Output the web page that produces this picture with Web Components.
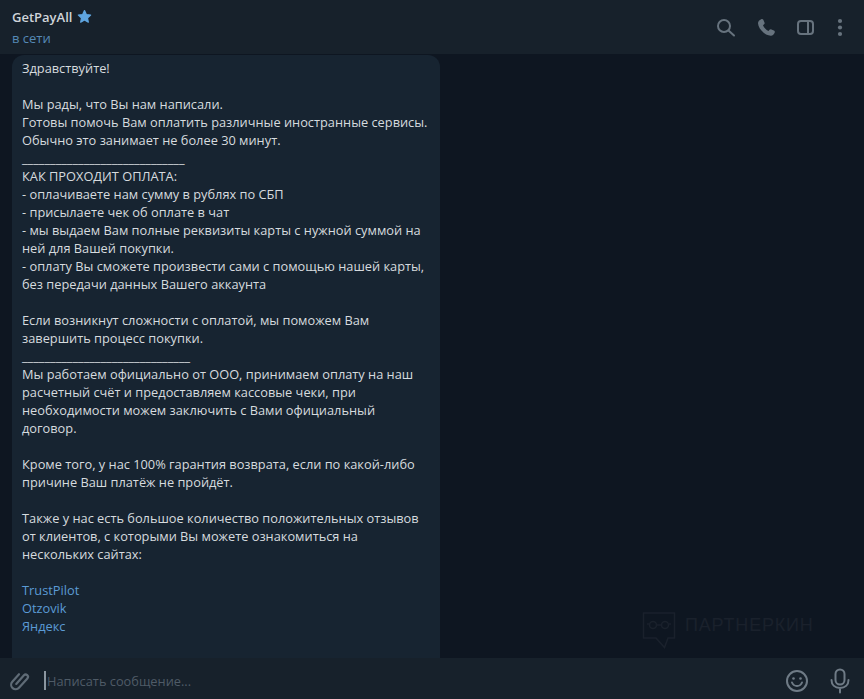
<!DOCTYPE html>
<html lang="ru">
<head>
<meta charset="utf-8">
<title>GetPayAll</title>
<style>
  html, body { margin: 0; height: 100%; background: #0e1621; }
  body { font-family: "Open Sans", "Noto Sans", sans-serif; overflow: hidden; }
  a { color: #5b9bd5; text-decoration: none; }
</style>
</head>
<body>
<chat-window>
  <chat-header slot="header" name="GetPayAll" status="в сети"></chat-header>
  <chat-bubble slot="messages">Здравствуйте!

Мы рады, что Вы нам написали.
Готовы помочь Вам оплатить различные иностранные сервисы.
Обычно это занимает не более 30 минут.
_____________________________
КАК ПРОХОДИТ ОПЛАТА:
- оплачиваете нам сумму в рублях по СБП
- присылаете чек об оплате в чат
- мы выдаем Вам полные реквизиты карты с нужной суммой на
ней для Вашей покупки.
- оплату Вы сможете произвести сами с помощью нашей карты,
без передачи данных Вашего аккаунта

Если возникнут сложности с оплатой, мы поможем Вам
завершить процесс покупки.
______________________________
Мы работаем официально от ООО, принимаем оплату на наш
расчетный счёт и предоставляем кассовые чеки, при
необходимости можем заключить с Вами официальный
договор.

Кроме того, у нас 100% гарантия возврата, если по какой-либо
причине Ваш платёж не пройдёт.

Также у нас есть большое количество положительных отзывов
от клиентов, с которыми Вы можете ознакомиться на
нескольких сайтах:

<a href="#">TrustPilot</a>
<a href="#">Otzovik</a>
<a href="#">Яндекс</a></chat-bubble>
  <water-mark slot="messages"></water-mark>
  <chat-composer slot="composer" placeholder="Написать сообщение..."></chat-composer>
</chat-window>

<script>
class ChatWindow extends HTMLElement {
    constructor() {
        super();
        this.attachShadow({ mode: 'open' });
        this.shadowRoot.innerHTML = `
            <style>
                :host { display: flex; flex-direction: column; height: 699px; width: 864px; }
                #messages {
                    flex: 1;
                    min-height: 0;
                    position: relative;
                    overflow: hidden;
                    padding: 1px 0 0 12px;
                }
            </style>
            <slot name="header"></slot>
            <div id="messages"><slot name="messages"></slot></div>
            <slot name="composer"></slot>
        `;
    }
}

class ChatHeader extends HTMLElement {
    constructor() {
        super();
        this.attachShadow({ mode: 'open' });
        this.shadowRoot.innerHTML = `
            <style>
                :host {
                    display: flex;
                    align-items: center;
                    justify-content: space-between;
                    height: 54px;
                    box-sizing: border-box;
                    padding: 0 21px 0 12px;
                    background: #17212b;
                }
                .title { display: flex; align-items: center; gap: 5px; height: 18px; margin-bottom: 3px;
                    color: #cfd4d9; font-size: 13px; font-weight: 600; }
                .status { color: #5589b6; font-size: 13px; line-height: 18px; }
                .icons { display: flex; align-items: center; gap: 20px; color: #67737e; }
                .panel { margin-left: -3px; }
                svg { display: block; }
            </style>
            <div>
                <div class="title"><span id="name"></span>
                    <svg width="15" height="15" viewBox="0 0 24 24"><path fill="#5fa5e0" stroke="#5fa5e0" stroke-width="2" stroke-linejoin="round" d="M12 2.500l2.900 6.300 6.900.8-5.100 4.700 1.400 6.800-6.100-3.400-6.100 3.400 1.400-6.800-5.100-4.700 6.900-.8z"/></svg>
                </div>
                <div class="status" id="status"></div>
            </div>
            <div class="icons">
                <svg width="22" height="22" viewBox="0 0 22 22" fill="none" stroke="currentColor" stroke-width="2" stroke-linecap="round"><circle cx="10" cy="10" r="6"/><path d="M14.500 14.500l5.500 5"/></svg>
                <svg width="22" height="22" viewBox="0 0 22 22" fill="currentColor"><path transform="translate(-1 1)" d="M6.200 2.200c.8-.5 1.700-.2 2.100.6l1.200 2.600c.3.700.2 1.400-.4 1.900L8 8.200c.9 2.300 3 4.600 5.500 5.700l1-1.100c.5-.5 1.200-.7 1.900-.4l2.500 1.100c.8.400 1.200 1.300.8 2.100-.7 1.900-2.100 3.200-3.900 3.100C9.700 18.300 3.200 11.600 3 6.200c0-1.900 1.400-3.300 3.200-4z"/></svg>
                <svg class="panel" width="22" height="22" viewBox="0 0 22 22" fill="none" stroke="currentColor" stroke-width="2"><rect x="3" y="5" width="15" height="13" rx="3"/><path d="M13 5v13"/></svg>
                <svg width="6" height="20" viewBox="0 0 6 20" fill="currentColor"><circle cx="3" cy="4" r="2.100"/><circle cx="3" cy="10.500" r="2.100"/><circle cx="3" cy="17" r="2.100"/></svg>
            </div>
        `;
        this.shadowRoot.getElementById('name').textContent = this.getAttribute('name');
        this.shadowRoot.getElementById('status').textContent = this.getAttribute('status');
    }
}

class ChatBubble extends HTMLElement {
    constructor() {
        super();
        this.attachShadow({ mode: 'open' });
        this.shadowRoot.innerHTML = `
            <style>
                :host {
                    display: block;
                    width: 428px;
                    box-sizing: border-box;
                    height: 640px;
                    padding: 4px 10px 0;
                    background: #172431;
                    border-radius: 12px;
                    color: #d6dbdf;
                    font-size: 12.8px;
                    line-height: 18px;
                }
                .text { white-space: pre; }
            </style>
            <div class="text"><slot></slot></div>
        `;
    }
}

class WaterMark extends HTMLElement {
    constructor() {
        super();
        this.attachShadow({ mode: 'open' });
        this.shadowRoot.innerHTML = `
            <style>
                :host {
                    position: absolute;
                    left: 642px;
                    top: 558px;
                    display: flex;
                    gap: 9px;
                    color: #1a212c;
                    font-family: "Liberation Sans", sans-serif;
                    font-size: 18px;
                    line-height: 26px;
                    letter-spacing: 0.8px;
                }
                svg { display: block; }
            </style>
            <svg width="34" height="37" viewBox="0 0 34 37" fill="none" stroke="currentColor" stroke-width="1.500"><path d="M1.500 1h31v25H26l-3.500 9.500L14 26H1.500z"/><circle cx="11" cy="13" r="3.500"/><circle cx="23" cy="13" r="3.500"/><path d="M5 12h2.500M14.500 13h5M26.500 12H29"/></svg>
            <span>ПАРТНЕРКИН</span>
        `;
    }
}

class ChatComposer extends HTMLElement {
    constructor() {
        super();
        this.attachShadow({ mode: 'open' });
        this.shadowRoot.innerHTML = `
            <style>
                :host {
                    display: flex;
                    align-items: center;
                    height: 41px;
                    box-sizing: border-box;
                    padding: 4px 14px 0 8px;
                    background: #17212b;
                }
                .input { flex: 1; display: flex; align-items: center; margin-left: 14px; font-size: 12.8px; line-height: 18px; color: #4f5b67; }
                .caret { width: 2px; height: 19px; background: #8b96a0; margin-right: 1px; }
                .icons { display: flex; align-items: center; gap: 21px; color: #6f7b86; }
                svg { display: block; }
            </style>
            <svg width="22" height="24" viewBox="0 0 22 24" fill="none" stroke="#5f6b76" stroke-width="2.200" stroke-linecap="round" overflow="visible"><path transform="rotate(42 11 12)" d="M6.500 7v10a4.500 4.500 0 0 0 9 0V4.500a2.300 2.300 0 0 0-4.600 0V16"/></svg>
            <div class="input"><span class="caret"></span><span id="ph"></span></div>
            <div class="icons">
                <svg width="24" height="24" viewBox="0 0 24 24" fill="none" stroke="currentColor" stroke-width="2" stroke-linecap="round"><circle cx="12" cy="12" r="10"/><path d="M7 13.500c1 2.500 3 3.500 5 3.500s4-1 5-3.500"/><circle cx="8.500" cy="9.500" r="1.300" fill="currentColor" stroke="none"/><circle cx="15.500" cy="9.500" r="1.300" fill="currentColor" stroke="none"/></svg>
                <svg width="20" height="26" viewBox="0 0 20 26" fill="none" stroke="currentColor" stroke-width="2" stroke-linecap="round"><rect x="5.500" y="1.500" width="9" height="15" rx="4.500"/><path d="M1.500 12c0 5 3.500 8 8.500 8s8.500-3 8.500-8M10 20v4.500"/></svg>
            </div>
        `;
        this.shadowRoot.getElementById('ph').textContent = this.getAttribute('placeholder');
    }
}

customElements.define('chat-window', ChatWindow);
customElements.define('chat-header', ChatHeader);
customElements.define('chat-bubble', ChatBubble);
customElements.define('water-mark', WaterMark);
customElements.define('chat-composer', ChatComposer);
</script>
</body>
</html>
